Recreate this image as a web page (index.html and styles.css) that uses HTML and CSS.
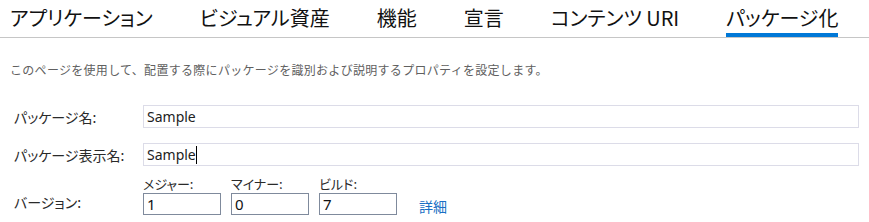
FILE: index.html
```html
<!DOCTYPE html>
<html lang="ja">
<head>
    <meta charset="UTF-8">
    <title>パッケージ化</title>
    <link rel="stylesheet" href="styles.css">
</head>
<body>
    <div class="tabs">
        <div class="tab">アプリケーション</div>
        <div class="tab">ビジュアル資産</div>
        <div class="tab">機能</div>
        <div class="tab">宣言</div>
        <div class="tab">コンテンツ URI</div>
        <div class="tab active">パッケージ化</div>
    </div>

    <p class="desc">このページを使用して、配置する際にパッケージを識別および説明するプロパティを設定します。</p>

    <div class="form">
        <div class="row">
            <label class="label">パッケージ名:</label>
            <div class="field">Sample</div>
        </div>
        <div class="row">
            <label class="label">パッケージ表示名:</label>
            <div class="field">Sample<span class="caret"></span></div>
        </div>
        <div class="row version">
            <label class="label">バージョン:</label>
            <div class="parts">
                <div class="part">
                    <span class="part-label">メジャー:</span>
                    <div class="num">1</div>
                </div>
                <div class="part">
                    <span class="part-label">マイナー:</span>
                    <div class="num">0</div>
                </div>
                <div class="part">
                    <span class="part-label">ビルド:</span>
                    <div class="num">7</div>
                </div>
                <a class="more" href="#">詳細</a>
            </div>
        </div>
    </div>
</body>
</html>
```

FILE: styles.css
```css
body {
    margin: 0;
    background-color: #fff;
    font-family: "Noto Sans", "Noto Sans CJK JP", sans-serif;
    color: #1e1e1e;
}
.tabs {
    display: flex;
    gap: 47px;
    padding-left: 10px;
    height: 37px;
    border-bottom: 1px solid #c6c6c6;
}
.tab {
    font-family: "Noto Sans CJK JP", sans-serif;
    font-feature-settings: "palt";
    font-size: 20px;
    line-height: 35px;
    height: 33px;
    color: #111;
}
.tab.active {
    border-bottom: 4px solid #0078d7;
}
.desc {
    margin: 18px 0 0 10px;
    font-family: "Noto Sans CJK JP", sans-serif;
    font-size: 12px;
    letter-spacing: 0.3px;
    line-height: 28px;
    color: #606060;
}
.form {
    margin-top: 21px;
    padding-left: 14px;
}
.row {
    display: flex;
    align-items: center;
    margin-bottom: 15px;
}
.label {
    width: 129px;
    flex-shrink: 0;
    font-family: "Noto Sans CJK JP", sans-serif;
    font-feature-settings: "palt";
    font-size: 14px;
    color: #2a2a2a;
}
.field {
    width: 708px;
    height: 21px;
    border: 1px solid #dcdce8;
    padding: 0 3px;
    font-size: 14px;
    line-height: 21px;
    color: #222;
}
.caret {
    display: inline-block;
    width: 1px;
    height: 18px;
    background-color: #000;
    vertical-align: -4px;
}
.version {
    align-items: flex-end;
    margin-top: -6px;
}
.version .label {
    padding-bottom: 3px;
}
.parts {
    display: flex;
    align-items: flex-end;
    gap: 10px;
}
.part {
    display: flex;
    flex-direction: column;
}
.part-label {
    font-family: "Noto Sans CJK JP", sans-serif;
    font-feature-settings: "palt";
    font-size: 13px;
    line-height: 18px;
    color: #2a2a2a;
}
.num {
    width: 70px;
    height: 20px;
    border: 1px solid #7f8a9c;
    padding: 0 3px;
    font-size: 15px;
    line-height: 20px;
    color: #111;
}
.more {
    margin-left: 12px;
    margin-bottom: -1px;
    font-family: "Noto Sans CJK JP", sans-serif;
    font-size: 14px;
    color: #1a6fc4;
    text-decoration: none;
}
```
